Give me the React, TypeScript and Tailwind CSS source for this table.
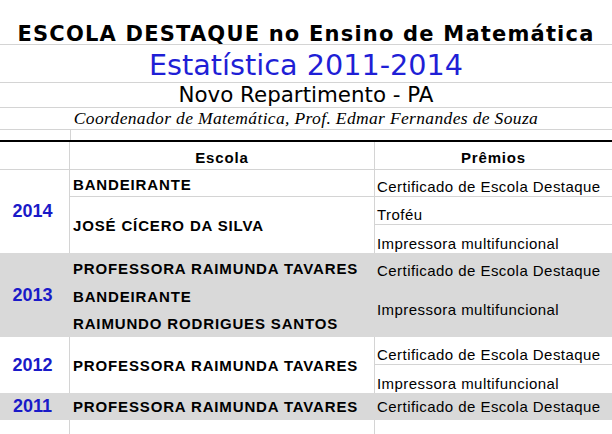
import { FC, ReactNode } from 'react';

const line = 'border-[#d4d4d4]';
const cellText = "font-['Liberation_Sans',Arial,sans-serif] text-[15px] leading-[17px] tracking-[0.45px] text-black";
const schoolText = "font-['Liberation_Sans',Arial,sans-serif] text-[15px] leading-[17px] tracking-[0.85px] font-bold text-black";

const Year: FC<{ children: ReactNode; span: string; gray?: boolean }> = ({ children, span, gray }) => (
  <div
    className={`${span} flex items-center justify-center pr-1 border-r ${gray ? 'border-transparent' : line} font-['Liberation_Sans',Arial,sans-serif] text-[18px] font-bold text-[#1a1ac8]`}
  >
    {children}
  </div>
);

const App: FC = () => {
  return (
    <div className="w-[612px] h-[434px] overflow-hidden bg-white">
      {/* cabeçalho */}
      <div className={`h-[45px] border-b ${line} flex items-end justify-center font-['DejaVu_Sans',Verdana,sans-serif] text-[21px] leading-[20px] tracking-[1.2px] font-bold text-black`}>
        ESCOLA DESTAQUE no Ensino de Matemática
      </div>
      <div className={`h-[38px] border-b ${line} flex items-end justify-center font-['DejaVu_Sans',Verdana,sans-serif] text-[28.7px] leading-[34px] text-[#1f1fd6]`}>
        Estatística 2011-2014
      </div>
      <div className={`h-[25px] border-b ${line} flex items-end justify-center font-['DejaVu_Sans',Verdana,sans-serif] text-[21.4px] leading-[24px] text-black`}>
        Novo Repartimento - PA
      </div>
      <div className={`h-[22px] border-b ${line} flex items-end justify-center pb-[1px] font-['Liberation_Serif','Times_New_Roman',serif] italic text-[17.5px] leading-[20px] tracking-[0.35px] text-black`}>
        Coordenador de Matemática, Prof. Edmar Fernandes de Souza
      </div>
      <div className="grid grid-cols-[70px_305px_1fr] h-[12px] border-b-2 border-black">
        <div />
        <div className={`border-l ${line}`} />
        <div />
      </div>

      {/* tabela */}
      <div className={`grid grid-cols-[70px_305px_1fr] h-[28px] border-b ${line}`}>
        <div className={`border-r ${line}`} />
        <div className={`border-r ${line} flex items-end justify-center pb-[3px] ${schoolText}`}>Escola</div>
        <div className={`flex items-end justify-center pb-[3px] ${schoolText}`}>Prêmios</div>
      </div>

      {/* 2014 */}
      <div className="grid grid-cols-[70px_305px_1fr] grid-rows-[27px_28px_28px]">
        <Year span="row-span-3">2014</Year>
        <div className={`border-r border-b ${line} flex items-center pl-[3px] pt-[2px] ${schoolText}`}>BANDEIRANTE</div>
        <div className={`flex items-end pl-[2px] pb-[1px] border-b ${line} ${cellText}`}>Certificado de Escola Destaque</div>
        <div className={`row-span-2 border-r ${line} flex items-center pl-[3px] ${schoolText}`}>JOSÉ CÍCERO DA SILVA</div>
        <div className={`flex items-end pl-[2px] pb-[1px] border-b ${line} ${cellText}`}>Troféu</div>
        <div className={`flex items-end pl-[2px] pb-[1px] ${cellText}`}>Impressora multifuncional</div>
      </div>

      {/* 2013 */}
      <div className="grid grid-cols-[70px_305px_1fr] grid-rows-[28px_28px_28px] bg-[#d9d9d9]">
        <Year span="row-span-3" gray>2013</Year>
        <div className={`flex items-center pl-[3px] pt-[3px] ${schoolText}`}>PROFESSORA RAIMUNDA TAVARES</div>
        <div className={`flex items-end pl-[2px] pb-[2px] ${cellText}`}>Certificado de Escola Destaque</div>
        <div className={`flex items-center pl-[3px] pt-[2px] ${schoolText}`}>BANDEIRANTE</div>
        <div className={`row-span-2 flex items-center pl-[2px] ${cellText}`}>Impressora multifuncional</div>
        <div className={`flex items-center pl-[3px] ${schoolText}`}>RAIMUNDO RODRIGUES SANTOS</div>
      </div>

      {/* 2012 */}
      <div className="grid grid-cols-[70px_305px_1fr] grid-rows-[28px_28px]">
        <Year span="row-span-2">2012</Year>
        <div className={`row-span-2 border-r ${line} flex items-center pl-[3px] ${schoolText}`}>PROFESSORA RAIMUNDA TAVARES</div>
        <div className={`flex items-end pl-[2px] pb-[1px] border-b ${line} ${cellText}`}>Certificado de Escola Destaque</div>
        <div className={`flex items-end pl-[2px] pb-[1px] ${cellText}`}>Impressora multifuncional</div>
      </div>

      {/* 2011 */}
      <div className="grid grid-cols-[70px_305px_1fr] h-[27px] bg-[#d9d9d9]">
        <Year span="" gray>2011</Year>
        <div className={`flex items-center pl-[3px] ${schoolText}`}>PROFESSORA RAIMUNDA TAVARES</div>
        <div className={`flex items-center pl-[2px] ${cellText}`}>Certificado de Escola Destaque</div>
      </div>

      <div className="grid grid-cols-[70px_305px_1fr] h-[28px]">
        <div className={`border-r ${line}`} />
        <div className={`border-r ${line}`} />
        <div />
      </div>
    </div>
  );
};

export default App;
